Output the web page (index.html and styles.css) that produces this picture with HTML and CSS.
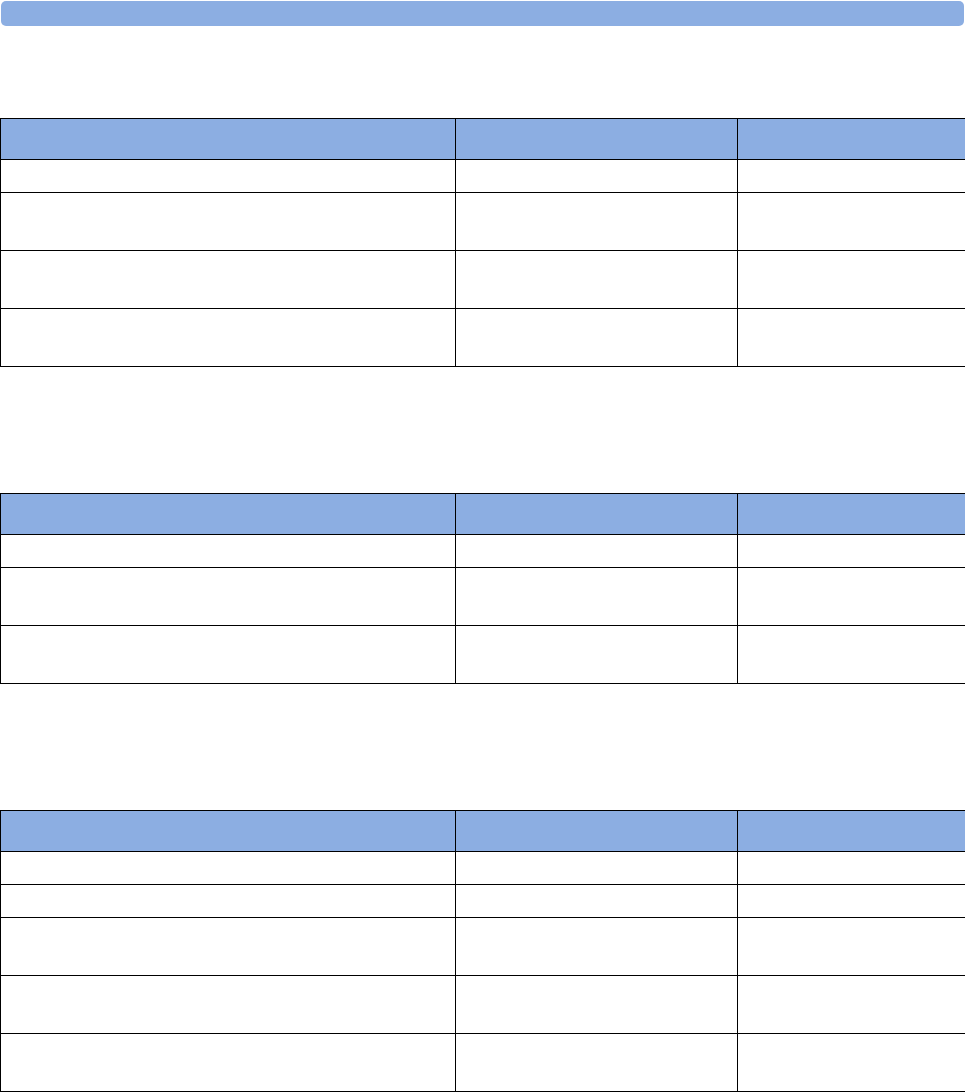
FILE: index.html
```html
<!DOCTYPE html>
<html lang="en">
<head>
<meta charset="utf-8">
<title>Tables</title>
<link rel="stylesheet" href="styles.css">
</head>
<body>
<div class="page">
  <div class="topbar"></div>

  <table class="spec spec-first">
    <colgroup><col class="c1"><col class="c2"><col class="c3"></colgroup>
    <thead><tr class="head"><th></th><th></th><th></th></tr></thead>
    <tbody>
      <tr class="r1"><td></td><td></td><td></td></tr>
      <tr class="r2"><td></td><td></td><td></td></tr>
      <tr class="r2"><td></td><td></td><td></td></tr>
      <tr class="r2"><td></td><td></td><td></td></tr>
    </tbody>
  </table>

  <table class="spec spec-next">
    <colgroup><col class="c1"><col class="c2"><col class="c3"></colgroup>
    <thead><tr class="head"><th></th><th></th><th></th></tr></thead>
    <tbody>
      <tr class="r1"><td></td><td></td><td></td></tr>
      <tr class="r2"><td></td><td></td><td></td></tr>
      <tr class="r2"><td></td><td></td><td></td></tr>
    </tbody>
  </table>

  <table class="spec spec-next">
    <colgroup><col class="c1"><col class="c2"><col class="c3"></colgroup>
    <thead><tr class="head"><th></th><th></th><th></th></tr></thead>
    <tbody>
      <tr class="r1"><td></td><td></td><td></td></tr>
      <tr class="r1"><td></td><td></td><td></td></tr>
      <tr class="r2"><td></td><td></td><td></td></tr>
      <tr class="r2"><td></td><td></td><td></td></tr>
      <tr class="r2"><td></td><td></td><td></td></tr>
    </tbody>
  </table>
</div>
</body>
</html>
```

FILE: styles.css
```css
html, body {
  margin: 0;
  padding: 0;
  background: #ffffff;
  font-family: "Liberation Sans", Arial, sans-serif;
}

.page {
  width: 965px;
  padding-top: 1px;
}

.topbar {
  margin: 0 1px 0 1px;
  height: 25px;
  border-radius: 5px;
  background: #8caee2;
}

.spec {
  width: 965px;
  table-layout: fixed;
  border-collapse: collapse;
  border-spacing: 0;
}

.spec-first { margin-top: 92px; }
.spec-next { margin-top: 126px; }

.c1 { width: 455px; }
.c2 { width: 282px; }
.c3 { width: 228px; }

.spec th,
.spec td {
  border: 1px solid #000000;
  padding: 0;
}

.spec th { background: #8caee2; }

.head th { height: 40px; }
.r1 td { height: 32px; }
.r2 td { height: 57px; }
```
